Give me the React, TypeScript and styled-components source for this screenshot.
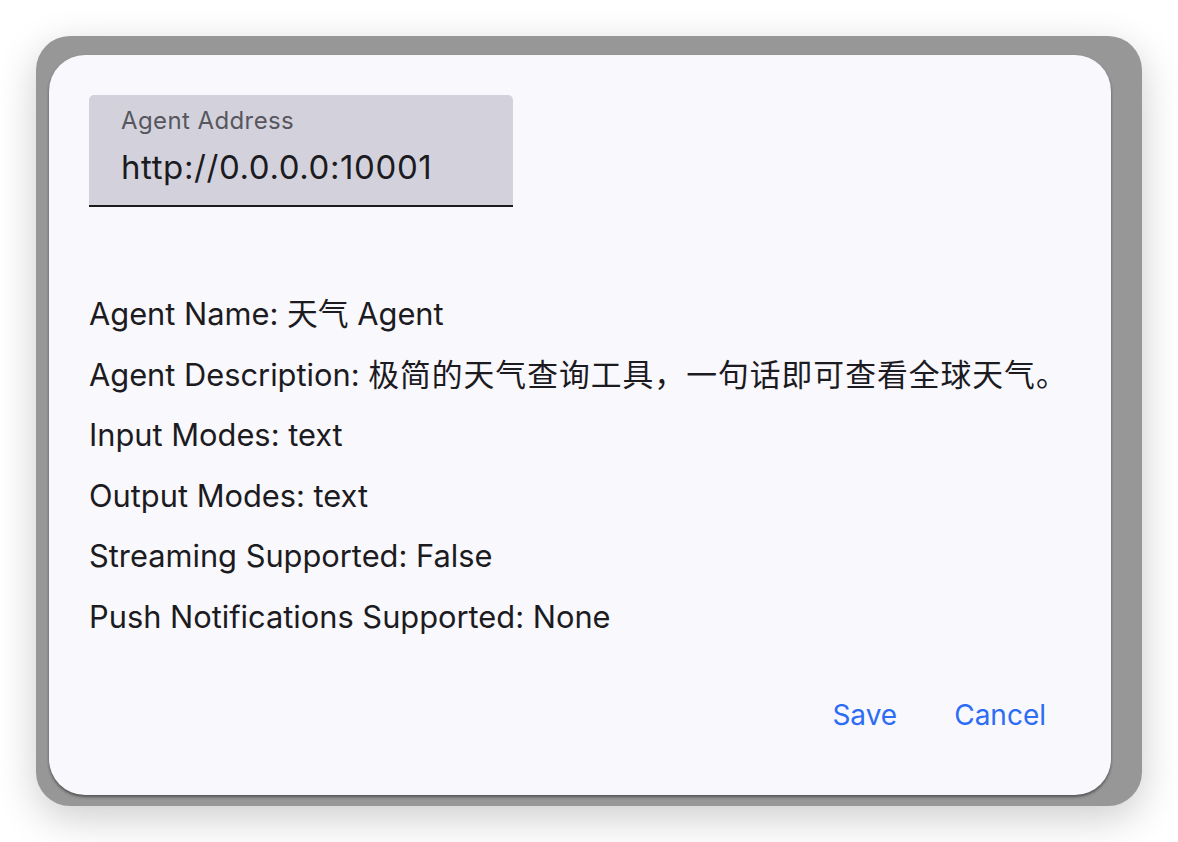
import React from "react";
import styled, { createGlobalStyle } from "styled-components";

const GlobalStyle = createGlobalStyle`
  html, body {
    margin: 0;
    padding: 0;
    background: #ffffff;
  }
  body {
    font-family: Inter, "Noto Sans CJK SC", sans-serif;
    color: #1c1b1f;
  }
`;

const Page = styled.div`
  width: 1178px;
  height: 842px;
  padding: 36px;
  box-sizing: border-box;
`;

const Backdrop = styled.div`
  width: 1106px;
  height: 770px;
  box-sizing: border-box;
  padding: 19px 31px 11px 13px;
  background: #979797;
  border-radius: 34px;
  box-shadow: 0 12px 40px rgba(0, 0, 0, 0.2);
`;

const Dialog = styled.div`
  height: 100%;
  box-sizing: border-box;
  background: #f9f8fd;
  border-radius: 36px;
  box-shadow: 0 2px 3px rgba(0, 0, 0, 0.45);
  padding: 40px 65px 0 40px;
  display: flex;
  flex-direction: column;
`;

const Field = styled.div`
  width: 424px;
  height: 112px;
  box-sizing: border-box;
  background: #d3d2dc;
  border-radius: 5px 5px 0 0;
  border-bottom: 2px solid #1c1b1f;
  padding: 11px 32px 0;
  display: flex;
  flex-direction: column;
`;

const FieldLabel = styled.span`
  font-size: 24px;
  letter-spacing: 0.4px;
  line-height: 30px;
  color: #57565e;
`;

const FieldValue = styled.span`
  font-size: 33px;
  letter-spacing: 0.6px;
  line-height: 62px;
  color: #1c1b1f;
`;

const InfoList = styled.div`
  display: flex;
  flex-direction: column;
  margin-top: 77px;
`;

const InfoLine = styled.p`
  margin: 0;
  font-size: 30.8px;
  line-height: 60.6px;
  white-space: nowrap;
  color: #1c1b1f;
`;

// CJK runs in the reference sit a touch wider than Noto's default advance
const Cjk = styled.span`
  letter-spacing: 1px;
`;

const Actions = styled.div`
  display: flex;
  justify-content: flex-end;
  gap: 57px;
  margin-top: 47px;
`;

const TextButton = styled.button`
  background: none;
  border: none;
  padding: 0;
  font-family: inherit;
  font-size: 28px;
  line-height: 40px;
  color: #2d6cf4;
  cursor: pointer;
`;

const info: [string, React.ReactNode][] = [
  ["Agent Name", <>天气 Agent</>],
  ["Agent Description", <Cjk>极简的天气查询工具，一句话即可查看全球天气。</Cjk>],
  ["Input Modes", "text"],
  ["Output Modes", "text"],
  ["Streaming Supported", "False"],
  ["Push Notifications Supported", "None"],
];

const App: React.FC = () => {
  return (
    <>
      <GlobalStyle />
      <Page>
        <Backdrop>
          <Dialog>
            <Field>
              <FieldLabel>Agent Address</FieldLabel>
              <FieldValue>http://0.0.0.0:10001</FieldValue>
            </Field>
            <InfoList>
              {info.map(([key, value]) => (
                <InfoLine key={key}>
                  {key}: {value}
                </InfoLine>
              ))}
            </InfoList>
            <Actions>
              <TextButton>Save</TextButton>
              <TextButton>Cancel</TextButton>
            </Actions>
          </Dialog>
        </Backdrop>
      </Page>
    </>
  );
};

export default App;
